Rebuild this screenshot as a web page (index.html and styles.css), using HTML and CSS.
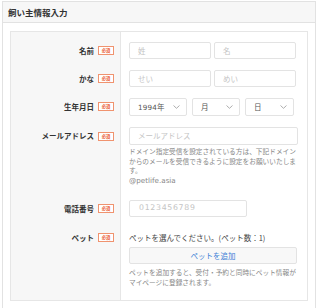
FILE: index.html
```html
<!DOCTYPE html>
<html lang="ja">
<head>
<meta charset="utf-8">
<link rel="stylesheet" href="styles.css">
</head>
<body>
<div class="panel">
  <div class="panel-head">飼い主情報入力</div>
  <div class="panel-body">
    <div class="form">
      <div class="lab first"><div class="lab-in"><span class="lab-text">名前</span><span class="req">必須</span></div></div>
      <div class="val first">
        <div class="pair">
          <div class="inp w82"><span class="ph">姓</span></div>
          <div class="inp w82"><span class="ph">名</span></div>
        </div>
      </div>

      <div class="lab"><div class="lab-in"><span class="lab-text">かな</span><span class="req">必須</span></div></div>
      <div class="val">
        <div class="pair">
          <div class="inp w82"><span class="ph">せい</span></div>
          <div class="inp w82"><span class="ph">めい</span></div>
        </div>
      </div>

      <div class="lab"><div class="lab-in"><span class="lab-text">生年月日</span><span class="req">必須</span></div></div>
      <div class="val">
        <div class="selects">
          <div class="sel s58"><span class="sv"><span class="num">1994</span>年</span><svg class="chev" width="7" height="4" viewBox="0 0 7 4"><path d="M0.5 0.5 L3.5 3.3 L6.5 0.5" fill="none" stroke="#999" stroke-width="0.8"/></svg></div>
          <div class="sel s48"><span class="sv">月</span><svg class="chev" width="7" height="4" viewBox="0 0 7 4"><path d="M0.5 0.5 L3.5 3.3 L6.5 0.5" fill="none" stroke="#999" stroke-width="0.8"/></svg></div>
          <div class="sel s49"><span class="sv">日</span><svg class="chev" width="7" height="4" viewBox="0 0 7 4"><path d="M0.5 0.5 L3.5 3.3 L6.5 0.5" fill="none" stroke="#999" stroke-width="0.8"/></svg></div>
        </div>
      </div>

      <div class="lab"><div class="lab-in tall"><span class="lab-text">メールアドレス</span><span class="req">必須</span></div></div>
      <div class="val">
        <div class="inp w168 tall"><span class="ph">メールアドレス</span></div>
        <p class="help">ドメイン指定受信を設定されている方は、下記ドメインからのメールを受信できるように設定をお願いいたします。<br><span class="domain">@petlife.asia</span></p>
      </div>

      <div class="lab gap"><div class="lab-in"><span class="lab-text">電話番号</span><span class="req">必須</span></div></div>
      <div class="val gap">
        <div class="inp w118"><span class="ph phone">0123456789</span></div>
      </div>

      <div class="lab last"><div class="lab-in tall"><span class="lab-text">ペット</span><span class="req">必須</span></div></div>
      <div class="val last">
        <div class="pet-text">ペットを選んでください。(ペット数：1)</div>
        <div class="btn">ペットを追加</div>
        <p class="help note">ペットを追加すると、受付・予約と同時にペット情報がマイページに登録されます。</p>
      </div>
    </div>
  </div>
</div>
</body>
</html>
```

FILE: styles.css
```css
* { box-sizing: border-box; }
html, body { margin: 0; padding: 0; background: #fff; }
body {
  font-family: "Noto Sans CJK JP", "Noto Sans", sans-serif;
  color: #333;
  width: 319px;
  height: 308px;
  overflow: hidden;
}
.panel {
  margin: 1px 3px 0 2px;
  border: 1px solid #e2e2e2;
  background: #fff;
}
.panel-head {
  height: 21px;
  background: #f7f7f7;
  border-bottom: 1px solid #e2e2e2;
  font-size: 8.5px;
  font-weight: bold;
  line-height: 20px;
  padding-left: 5px;
  color: #333;
}
.panel-body {
  padding: 8px 7px 8px 7px;
}
.form {
  display: grid;
  grid-template-columns: 110px 1fr;
  border: 1px solid #e6e6e6;
}
.lab {
  background: #f7f7f7;
  border-right: 1px solid #e6e6e6;
  padding: 5px 6px 6px 0;
  display: flex;
  justify-content: flex-end;
  align-items: flex-start;
}
.val {
  padding: 5px 10px 6px 8px;
}
.first { padding-top: 10px; }
.gap { padding-top: 8px; }
.last { padding-top: 6px; padding-bottom: 13px; }
.lab-in {
  height: 17px;
  display: flex;
  align-items: center;
  gap: 4px;
}
.lab-in.tall { height: 18px; }
.lab-text {
  font-size: 7.5px;
  font-weight: bold;
  line-height: 1;
  color: #333;
}
.req {
  width: 16px;
  height: 9px;
  border: 1px solid #f0936f;
  background: #fff;
  color: #e9552c;
  font-size: 4.3px;
  font-weight: bold;
  line-height: 7px;
  text-align: center;
}
.pair { display: flex; gap: 3px; }
.inp {
  height: 17px;
  border: 1px solid #e3e3e3;
  border-radius: 2px;
  background: #fff;
  display: flex;
  align-items: center;
  padding-left: 8px;
}
.inp.tall { height: 18px; }
.w82 { width: 82px; }
.w168 { width: 169px; }
.w118 { width: 118px; }
.ph {
  font-size: 7.5px;
  color: #c4c4c4;
  line-height: 1;
}
.phone {
  font-family: "DejaVu Sans", sans-serif;
  font-size: 7.8px;
  letter-spacing: 0.7px;
  padding-left: 1px;
}
.num {
  font-family: "DejaVu Sans", sans-serif;
  font-size: 7.2px;
  letter-spacing: 0.2px;
}
.selects { display: flex; gap: 5px; }
.sel {
  height: 18px;
  border: 1px solid #e3e3e3;
  border-radius: 2px;
  background: #fff;
  display: flex;
  align-items: center;
  justify-content: space-between;
  padding: 0 6px 0 8px;
}
.s58 { width: 58px; }
.s48 { width: 48px; }
.s49 { width: 49px; }
.sv { font-size: 7.5px; color: #555; line-height: 1; }
.chev { display: block; }
.help {
  margin: 2px 0 0 0;
  width: 169px;
  font-size: 6.7px;
  line-height: 9.7px;
  color: #888;
}
.domain {
  font-family: "DejaVu Sans", sans-serif;
  font-size: 7.2px;
}
.pet-text {
  font-size: 7.5px;
  line-height: 18px;
  color: #444;
}
.btn {
  width: 168px;
  height: 17px;
  border: 1px solid #e3e3e3;
  border-radius: 2px;
  background: #f8f8f8;
  color: #3d7fd6;
  font-size: 7.5px;
  line-height: 15px;
  text-align: center;
}
.note { margin-top: 4px; }
```
